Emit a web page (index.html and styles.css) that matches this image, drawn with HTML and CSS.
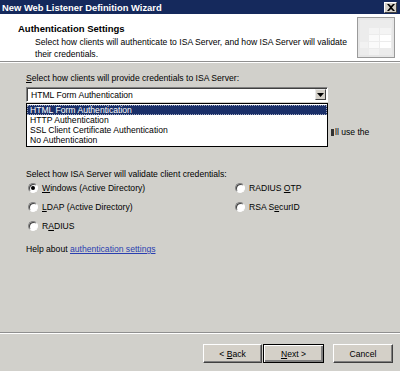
FILE: index.html
```html
<!DOCTYPE html>
<html lang="en">
  <head>
    <meta charset="utf-8">
    <title>New Web Listener Definition Wizard</title>
    <link rel="stylesheet" href="styles.css">
  </head>
  <body>
    <div class="window">
      <div class="titlebar">
        <span class="titlebar-text">New Web Listener Definition Wizard</span>
        <button class="close-button">
          <svg width="8" height="7" viewBox="0 0 8 7"><path d="M0 0 L2 0 L4 2 L6 0 L8 0 L5 3.5 L8 7 L6 7 L4 5 L2 7 L0 7 L3 3.5 Z" fill="#000"/></svg>
        </button>
      </div>

      <div class="header">
        <div class="header-text">
          <div class="header-title">Authentication Settings</div>
          <div class="header-desc">Select how clients will authenticate to ISA Server, and how ISA Server will validate their credentials.</div>
        </div>
        <div class="header-icon">
          <svg width="38" height="41" viewBox="0 0 38 41">
            <rect x="0.5" y="0.5" width="37" height="40" fill="#e6e6e6" stroke="#9a9a9a"/>
            <rect x="3" y="3" width="32" height="35" fill="#ececec"/>
            <rect x="12" y="11" width="10" height="6" fill="#f4f4f4"/>
            <rect x="23" y="11" width="11" height="6" fill="#f4f4f4"/>
            <rect x="12" y="18" width="10" height="6" fill="#fafafa"/>
            <rect x="23" y="18" width="11" height="6" fill="#ffffff"/>
            <rect x="3" y="25" width="8" height="6" fill="#f2f2f2"/>
            <rect x="12" y="25" width="10" height="6" fill="#fafafa"/>
            <rect x="23" y="25" width="11" height="6" fill="#ffffff"/>
            <rect x="12" y="32" width="10" height="6" fill="#f2f2f2"/>
          </svg>
        </div>
      </div>
      <div class="separator"></div>

      <div class="content">
        <div class="label"><u>S</u>elect how clients will provide credentials to ISA Server:</div>
        <div class="combo">
          <div class="combo-field">HTML Form Authentication</div>
          <div class="combo-arrow">
            <svg width="7" height="4" viewBox="0 0 7 4"><path d="M0 0 H7 L3.5 4 Z" fill="#000"/></svg>
          </div>
          <ul class="dropdown">
            <li class="dropdown-item selected">HTML Form Authentication</li>
            <li class="dropdown-item">HTTP Authentication</li>
            <li class="dropdown-item">SSL Client Certificate Authentication</li>
            <li class="dropdown-item">No Authentication</li>
          </ul>
        </div>
        <div class="hidden-row">
          <span class="hidden-mark"></span>
          <span>ll use the</span>
        </div>

        <div class="label validate-label">Select how ISA Server will validate client credentials:</div>
        <div class="radio-grid">
          <div class="radio-col first">
            <label class="radio-row"><span class="radio checked"></span><span><u>W</u>indows (Active Directory)</span></label>
            <label class="radio-row"><span class="radio"></span><span><u>L</u>DAP (Active Directory)</span></label>
            <label class="radio-row"><span class="radio"></span><span>R<u>A</u>DIUS</span></label>
          </div>
          <div class="radio-col">
            <label class="radio-row"><span class="radio"></span><span>RADIUS <u>O</u>TP</span></label>
            <label class="radio-row"><span class="radio"></span><span>RSA S<u>e</u>curID</span></label>
          </div>
        </div>

        <div class="help">Help about <a href="#">authentication settings</a></div>
      </div>

      <div class="separator"></div>
      <div class="footer">
        <button class="button">&lt; <u>B</u>ack</button>
        <button class="button default"><u>N</u>ext &gt;</button>
        <button class="button cancel">Cancel</button>
      </div>
    </div>
  </body>
</html>
```

FILE: styles.css
```css
body {
  margin: 0;
  padding: 0;
  font-family: "Liberation Sans", Arial, sans-serif;
  font-size: 8.6px;
  color: #000;
}

.window {
  width: 400px;
  height: 371px;
  background: #d1d0cb;
  display: flex;
  flex-direction: column;
  overflow: hidden;
}

/* Title bar */
.titlebar {
  height: 14px;
  background: #15295c;
  display: flex;
  align-items: center;
  justify-content: space-between;
  padding: 0 3px 0 2px;
}

.titlebar-text {
  color: #fff;
  font-weight: bold;
  font-size: 9.4px;
}

.close-button {
  width: 13px;
  height: 11px;
  padding: 0;
  background: #d4d0c8;
  border: 1px solid;
  border-color: #fff #404040 #404040 #fff;
  display: flex;
  align-items: center;
  justify-content: center;
}

/* Header */
.header {
  height: 47px;
  background: #fff;
  display: flex;
  justify-content: space-between;
  align-items: flex-start;
  padding: 0 5px 0 18px;
}

.header-text {
  padding-top: 9px;
}

.header-title {
  font-weight: bold;
  font-size: 9.5px;
  margin-bottom: 2px;
}

.header-desc {
  padding-left: 17px;
  width: 318px;
  line-height: 12px;
}

.header-icon {
  padding-top: 3px;
  height: 41px;
}

.separator {
  height: 1px;
  background: #8f8f8f;
  border-bottom: 1px solid #fff;
}

/* Content */
.content {
  flex: 1;
  padding: 9px 0 0 26px;
}

.label {
  height: 12px;
  line-height: 12px;
}

.combo {
  position: relative;
  width: 302px;
  height: 15px;
  margin-top: 3px;
  box-sizing: border-box;
  background: #fff;
  border: 1px solid;
  border-color: #808080 #fff #fff #808080;
  box-shadow: inset 1px 1px 0 #404040;
  display: flex;
  align-items: center;
}

.combo-field {
  flex: 1;
  padding-left: 4px;
}

.combo-arrow {
  width: 11px;
  height: 11px;
  margin-right: 1px;
  box-sizing: border-box;
  background: #d4d0c8;
  border: 1px solid;
  border-color: #e8e8e8 #404040 #404040 #e8e8e8;
  display: flex;
  align-items: center;
  justify-content: center;
}

.dropdown {
  position: absolute;
  left: -1px;
  top: 15px;
  width: 302px;
  box-sizing: border-box;
  margin: 0;
  padding: 1px 0;
  list-style: none;
  background: #fff;
  border: 1px solid #000;
  z-index: 10;
}

.dropdown-item {
  height: 10px;
  line-height: 10px;
  padding-left: 3px;
}

.dropdown-item.selected {
  background: #1a2f68;
  color: #fff;
  outline: 1px dotted #a0a8c0;
  outline-offset: -1px;
}

.hidden-row {
  display: flex;
  align-items: center;
  gap: 1px;
  margin-top: 24px;
  height: 12px;
  padding-left: 305px;
  white-space: nowrap;
}

.hidden-mark {
  width: 3px;
  height: 7px;
  background: #333;
}

.validate-label {
  margin-top: 30px;
}

.radio-grid {
  display: flex;
  margin-top: 2px;
}

.radio-col {
  display: flex;
  flex-direction: column;
  gap: 7px;
}

.radio-col.first {
  width: 207px;
}

.radio-row {
  display: flex;
  align-items: center;
  gap: 4px;
  height: 12px;
  padding-left: 2px;
}

.radio {
  width: 10px;
  height: 10px;
  box-sizing: border-box;
  border-radius: 50%;
  background: #fff;
  border: 1px solid;
  border-color: #808080 #fff #fff #808080;
  box-shadow: inset 1px 1px 0 #404040;
  position: relative;
}

.radio.checked::after {
  content: "";
  position: absolute;
  left: 2px;
  top: 2px;
  width: 4px;
  height: 4px;
  border-radius: 50%;
  background: #000;
}

.help {
  margin-top: 12px;
}

.help a {
  color: #2a3fb0;
}

/* Footer */
.footer {
  height: 37px;
  display: flex;
  justify-content: flex-end;
  align-items: flex-start;
  padding: 10px 7px 0 0;
  box-sizing: border-box;
}

.button {
  width: 59px;
  height: 19px;
  padding: 0;
  font-family: "Liberation Sans", Arial, sans-serif;
  font-size: 8.6px;
  color: #000;
  background: #d4d0c8;
  border: 1px solid;
  border-color: #fff #404040 #404040 #fff;
  box-shadow: inset -1px -1px 0 #808080;
}

.button.default {
  width: 61px;
  margin-left: 1px;
  border: 1px solid #000;
  box-shadow: inset 1px 1px 0 #fff, inset -2px -2px 0 #808080;
}

.button.cancel {
  width: 60px;
  margin-left: 9px;
}
```
